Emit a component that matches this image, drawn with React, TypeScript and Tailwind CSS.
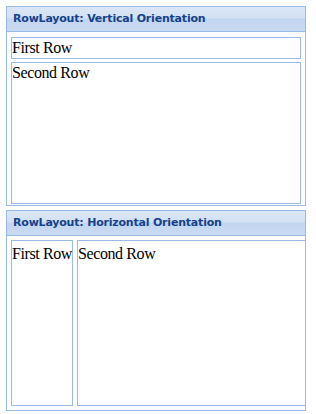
const HEADER_FONT = { fontFamily: 'Tahoma, "DejaVu Sans", Verdana, sans-serif' };

function PanelHeader({ title }: { title: string }) {
  return (
    <div
      className="flex h-[25px] items-center border-b border-[#99bbe8] bg-[linear-gradient(to_bottom,#dae6f5_0%,#d3e1f3_45%,#c2d6f0_50%,#c9dbf2_100%)] pl-[6px] text-[11px] font-bold text-[#15428b]"
      style={HEADER_FONT}
    >
      <span className="tracking-[-0.2px]">{title}</span>
    </div>
  );
}

function Box({ label, className }: { label: string; className: string }) {
  return (
    <div
      className={`border border-[#99bbe8] bg-white text-[16px] leading-[18px] tracking-[-0.4px] text-black whitespace-nowrap ${className}`}
      style={{ fontFamily: '"Liberation Serif", "Times New Roman", serif' }}
    >
      {label}
    </div>
  );
}

export default function App() {
  return (
    <div className="flex h-[414px] w-[316px] flex-col gap-[4px] bg-white pl-[6px] pt-[6px]">
      <div className="flex h-[200px] w-[300px] flex-col border border-[#99bbe8] bg-white">
        <PanelHeader title="RowLayout: Vertical Orientation" />
        <div className="flex flex-1 flex-col gap-[3px] px-[4px] pt-[5px] pb-[1px]">
          <Box label="First Row" className="h-[22px] pt-[1px]" />
          <Box label="Second Row" className="flex-1 pt-[1px]" />
        </div>
      </div>
      <div className="flex h-[201px] w-[300px] flex-col border border-[#99bbe8] bg-white">
        <PanelHeader title="RowLayout: Horizontal Orientation" />
        <div className="flex flex-1 gap-[4px] pl-[4px] pt-[4px] pb-[4px]">
          <Box label="First Row" className="w-[62px] shrink-0 overflow-hidden pt-[4px]" />
          <Box label="Second Row" className="w-[229px] shrink-0 pt-[4px]" />
        </div>
      </div>
    </div>
  );
}
